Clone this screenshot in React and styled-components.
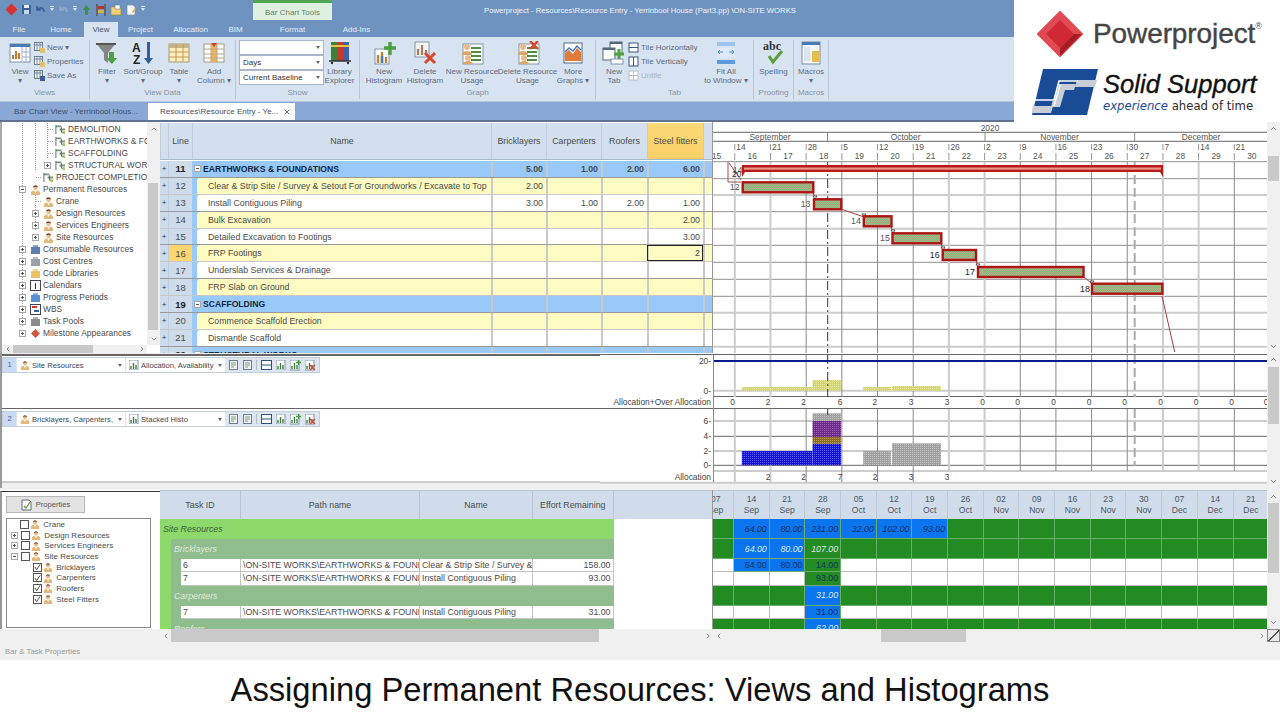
import React from 'react'
import styled, { createGlobalStyle } from 'styled-components'
import { ChevronUp, ChevronDown, ChevronLeft, ChevronRight, X } from 'lucide-react'

const GlobalStyle = createGlobalStyle`
  html, body { margin: 0; padding: 0; background: #fff; }
  body { font-family: "Liberation Sans", Arial, sans-serif; }
  * { box-sizing: border-box; }
`

const Page = styled.div`
  position: relative;
  width: 1280px;
  height: 720px;
  overflow: hidden;
  display: flex;
  flex-direction: column;
  background: #fff;
  > * { flex-shrink: 0; }
`

/* title bar */
const TitleBar = styled.div`
  height: 22px;
  display: flex;
  background: #6f93c0;
`
const Qat = styled.div`
  width: 253px;
  display: flex;
  align-items: center;
  gap: 3px;
  padding: 0 0 3px 5px;
`
const ContextTab = styled.div`
  width: 79px;
  height: 20px;
  padding-top: 5px;
  text-align: center;
  font-size: 8px;
  color: #63806a;
  background: #dff0de;
  border-top: 3px solid #4ea651;
`
const WindowTitle = styled.div`
  padding: 6px 0 0 152px;
  font-size: 7.7px;
  color: #f0f4f9;
  white-space: nowrap;
`

/* ribbon tabs */
const TabRow = styled.div`
  height: 15px;
  display: flex;
  background: #6f93c0;
`
const RibbonTab = styled.div`
  width: ${p => p.$w}px;
  height: 15px;
  line-height: 15px;
  text-align: center;
  font-size: 8px;
  color: ${p => (p.$active ? '#46566b' : '#e6edf5')};
  background: ${p => (p.$active ? '#d8e3f1' : 'transparent')};
`

/* ribbon */
const Ribbon = styled.div`
  height: 64px;
  display: flex;
  padding-top: 3px;
  background: #d8e3f1;
  color: #5b6b80;
  font-size: 8px;
`
const Group = styled.div`
  width: ${p => p.$w}px;
  height: 59px;
  display: flex;
  flex-direction: column;
  border-right: 1px solid #b9c6d8;
`
const GroupBody = styled.div`
  flex: 1;
  display: flex;
  padding-left: ${p => p.$pad || 0}px;
`
const GroupLabel = styled.div`
  height: 12px;
  line-height: 11px;
  text-align: center;
  color: #8593a6;
`
const BigButton = styled.div`
  width: ${p => p.$w}px;
  flex: none;
  display: flex;
  flex-direction: column;
  align-items: center;
  text-align: center;
  line-height: 9px;
  white-space: nowrap;
  svg { flex: none; }
`
const BigIcon = styled.div`
  height: 25px;
  margin-bottom: 2px;
  display: flex;
  align-items: center;
  justify-content: center;
`
const SmallStack = styled.div`
  width: ${p => p.$w}px;
  flex: none;
  display: flex;
  flex-direction: column;
  gap: 2px;
  padding-top: 1px;
`
const SmallItem = styled.div`
  height: 12px;
  display: flex;
  align-items: center;
  gap: 2px;
  white-space: nowrap;
  color: ${p => (p.$off ? '#a9b4c2' : 'inherit')};
`
const Combos = styled.div`
  width: 85px;
  flex: none;
  display: flex;
  flex-direction: column;
`
const Combo = styled.div`
  width: 85px;
  height: 15px;
  display: flex;
  align-items: center;
  padding: 0 3px;
  color: #333;
  background: #fff;
  border: 1px solid #a9b6c8;
  &::after { content: ""; margin-left: auto; border: 2.5px solid transparent; border-top: 3px solid #667; border-bottom: 0; }
`

/* document tabs */
const DocTabs = styled.div`
  height: 19px;
  display: flex;
  padding-top: 1px;
  background: #8aa8d5;
  border-top: 1px solid #b5c6de;
  font-size: 8px;
`
const DocTab = styled.div`
  width: ${p => p.$w}px;
  height: 17px;
  display: flex;
  align-items: center;
  justify-content: space-between;
  padding: 0 4px 0 ${p => p.$pad}px;
  color: #3f4f66;
  background: ${p => (p.$active ? '#fff' : 'transparent')};
  white-space: nowrap;
`
const PaneRule = styled.div`
  height: 2px;
  background: #5f7391;
`

/* upper pane */
const UpperPane = styled.div`
  height: 231px;
  display: flex;
  background: #fff;
`
const TreeColumn = styled.div`
  width: 160px;
  flex: none;
  display: flex;
  flex-direction: column;
  border-left: 2px solid #aaa;
`
const TreeMain = styled.div`
  height: 223px;
  display: flex;
`
const TreeList = styled.div`
  width: 145px;
  overflow: hidden;
  padding-top: 1px;
  background-color: #fff;
`
const TreeRow = styled.div`
  height: 12px;
  display: flex;
  align-items: center;
  gap: 2px;
  padding-left: ${p => p.$left}px;
  font-size: 8.4px;
  letter-spacing: 0.05px;
  color: #4a4a4a;
  white-space: nowrap;
  background-image: ${p =>
    (p.$guides || [])
      .map(() => 'repeating-linear-gradient(to bottom, #9a9a9a 0 1px, transparent 1px 2px)')
      .join(',') || 'none'};
  background-size: 1px 100%;
  background-repeat: no-repeat;
  background-position: ${p => (p.$guides || []).map(x => `${x}px 0`).join(',') || '0 0'};
  svg { flex: none; }
`
const Stub = styled.span`
  width: ${p => p.$w || 8}px;
  height: 1px;
  flex: none;
  background: repeating-linear-gradient(to right, #9a9a9a 0 1px, transparent 1px 2px);
`
const Expander = styled.span`
  width: 7px;
  height: 7px;
  flex: none;
  margin-right: 2px;
  position: relative;
  background: #fff;
  border: 1px solid #a8a8a8;
  &::before { content: ""; position: absolute; left: 1px; right: 1px; top: 2px; height: 1px; background: #555; }
  &::after { content: ""; position: absolute; top: 1px; bottom: 1px; left: 2px; width: 1px; background: ${p => (p.$open ? 'transparent' : '#555')}; }
`
const VBar = styled.div`
  width: ${p => p.$w || 13}px;
  flex: none;
  height: ${p => p.$h}px;
  display: flex;
  flex-direction: column;
  align-items: center;
  background: #f0f0f0;
  color: #555;
`
const VArrow = styled.div`
  height: 13px;
  flex: none;
  display: flex;
  align-items: center;
  justify-content: center;
`
const VTrack = styled.div`
  flex: 1;
  width: 100%;
  padding: ${p => p.$top}px 0 0 1px;
`
const VThumb = styled.div`
  width: ${p => p.$w || 11}px;
  height: ${p => p.$size}px;
  background: #c9c9c9;
`
const HBar = styled.div`
  width: ${p => p.$w}px;
  flex: none;
  height: ${p => p.$h || 13}px;
  display: flex;
  align-items: center;
  background: #f0f0f0;
  color: #555;
`
const HArrow = styled.div`
  width: 11px;
  flex: none;
  display: flex;
  justify-content: center;
`
const HTrack = styled.div`
  flex: 1;
  height: 100%;
  padding-left: ${p => p.$left}px;
`
const HThumb = styled.div`
  width: ${p => p.$size}px;
  height: 100%;
  background: #c9c9c9;
`

/* activity table */
const ActivityTable = styled.div`
  width: 553px;
  flex: none;
  height: 231px;
  overflow: hidden;
  font-size: 8.8px;
  color: #4b4b4b;
  border-right: 1px solid #9a9a9a;
`
const columns = '8px 24px 299px 55px 55px 46px 56px 9px'
const HeadRow = styled.div`
  display: grid;
  grid-template-columns: ${columns};
  height: 37px;
  margin-top: 1px;
  margin-bottom: 1px;
  background: #d3dfec;
  border-bottom: 1px solid #a9b9cc;
`
const HeadCell = styled.div`
  display: flex;
  align-items: center;
  justify-content: center;
  border-left: 1px solid #bfcddd;
  background: ${p => (p.$hot ? 'linear-gradient(#fbd976, #fbd068)' : 'transparent')};
`
const BodyRow = styled.div`
  display: grid;
  grid-template-columns: ${columns};
  height: 16.9px;
  border-bottom: 1px solid ${p => (p.$soft ? '#c8c8c8' : '#9a9a9a')};
  background: ${p => p.$bg};
`
const PlusCell = styled.div`
  display: flex;
  align-items: center;
  justify-content: center;
  font-size: 8px;
  color: #333;
  background: #cddbeb;
`
const LineCell = styled.div`
  display: flex;
  align-items: center;
  justify-content: center;
  font-size: 9.5px;
  font-weight: ${p => (p.$bold ? 700 : 400)};
  color: ${p => (p.$bold ? '#222' : '#4b4b4b')};
  background: ${p => (p.$hot ? '#fbd56f' : '#cddbeb')};
  border-left: 1px solid #bfcddd;
`
const NameCell = styled.div`
  padding-left: ${p => (p.$summary ? 0 : 5)}px;
  background: #99c9f9;
  overflow: hidden;
`
const NameInner = styled.div`
  height: 100%;
  display: flex;
  align-items: center;
  padding-left: ${p => (p.$summary ? 2 : 11)}px;
  background: ${p => p.$bg};
  border-top-left-radius: ${p => (p.$summary ? 0 : 3)}px;
  font-size: ${p => (p.$summary ? 8.6 : 8.8)}px;
  font-weight: ${p => (p.$summary ? 700 : 400)};
  color: ${p => (p.$summary ? '#12263f' : '#4b4b4b')};
  white-space: nowrap;
`
const NumCell = styled.div`
  display: flex;
  align-items: center;
  justify-content: flex-end;
  padding-right: 3px;
  font-weight: ${p => (p.$bold ? 700 : 400)};
  border-left: 2px solid #c9c9c9;
  outline: ${p => (p.$active ? '1px solid #222' : 'none')};
  outline-offset: -1px;
`

/* gantt */
const ChartArea = styled.div`
  width: 554px;
  flex: none;
  overflow: hidden;
  svg { display: block; font-family: "Liberation Sans", Arial, sans-serif; }
`

/* histogram pane */
const HistPane = styled.div`
  height: 135px;
  display: flex;
  background: #fff;
  svg { display: block; font-family: "Liberation Sans", Arial, sans-serif; flex: none; }
`
const HistLeft = styled.div`
  width: 600px;
  flex: none;
  display: flex;
  flex-direction: column;
  padding-top: 1px;
  background: #f0f0f0;
  border-left: 2px solid #999;
`
const HistBlock = styled.div`
  height: ${p => p.$h}px;
  padding-top: ${p => p.$pad}px;
  background: #fff;
  border-top: ${p => p.$rule}px solid #666;
  border-bottom: ${p => p.$end || 0}px solid #ccc;
`
const HistToolbar = styled.div`
  width: 318px;
  height: 16px;
  display: flex;
  align-items: center;
  font-size: 7.6px;
  color: #3b4653;
  background: #dde5ef;
  border: 1px solid #c3cedb;
`
const RowBadge = styled.div`
  width: 13px;
  height: 100%;
  flex: none;
  text-align: center;
  line-height: 13px;
  color: #47628a;
  background: #c9dbf2;
`
const HistCombo = styled.div`
  width: ${p => p.$w}px;
  height: 100%;
  flex: none;
  margin-left: 1px;
  display: flex;
  align-items: center;
  gap: 2px;
  padding: 0 3px;
  background: #fff;
  white-space: nowrap;
  overflow: hidden;
  span { flex: 1; overflow: hidden; }
  &::after { content: ""; flex: none; border: 2px solid transparent; border-top: 3px solid #667; border-bottom: 0; }
`
const ToolGroup = styled.div`
  display: flex;
  flex: none;
  align-items: center;
  gap: 4px;
  padding: 0 ${p => (p.$sep ? 3 : 0)}px 0 4px;
  border-right: ${p => (p.$sep ? '1px solid #b0bccb' : '0')};
`
const Gap = styled.div`
  height: 2px;
  background: #f0f0f0;
`

/* lower pane */
const PropsColumn = styled.div`
  width: 160px;
  flex: none;
  padding: 4px 0 0 4px;
  border-left: 2px solid #999;
  border-top: 1px solid #333;
  margin-top: 1px;
`
const PropsButton = styled.div`
  width: 79px;
  height: 17px;
  display: flex;
  align-items: center;
  justify-content: center;
  gap: 4px;
  font-size: 7.6px;
  color: #555;
  background: #e3e3e3;
  border: 1px solid #b5b5b5;
`
const PropsTree = styled.div`
  width: 145px;
  height: 110px;
  margin-top: 5px;
  border: 1px solid #8a8a8a;
  font-size: 8px;
  color: #4b4b4b;
`
const PropsRow = styled.div`
  height: 10.7px;
  display: flex;
  align-items: center;
  gap: 1px;
  padding-left: ${p => p.$left}px;
  white-space: nowrap;
`
const CheckBox = styled.span`
  width: 9px;
  height: 9px;
  flex: none;
  display: flex;
  align-items: center;
  justify-content: center;
  background: #fff;
  border: 1px solid #555;
`
const LowerTable = styled.div`
  width: 553px;
  flex: none;
  overflow: hidden;
  font-size: 8.8px;
  color: #4b4b4b;
  border-right: 1px solid #999;
`
const lowerCols = '81px 179px 113px 80.5px 99.5px'
const LowerHead = styled.div`
  display: grid;
  grid-template-columns: ${lowerCols};
  height: 29px;
  background: #d0dcea;
  border-top: 1px solid #b8c4d2;
`
const LowerHeadCell = styled.div`
  display: flex;
  align-items: center;
  justify-content: center;
  border-right: 1px solid #b5c3d4;
`
const LowerBody = styled.div`
  width: 453.5px;
  height: 110px;
  overflow: hidden;
  background: #8dd96c;
`
const BandTitle = styled.div`
  height: 20px;
  display: flex;
  align-items: center;
  padding-left: 3px;
  font-style: italic;
  color: #3d5f3d;
  background: #8dd96c;
`
const Nested = styled.div`
  margin-left: 11px;
  background: #90bd8e;
`
const SubTitle = styled.div`
  height: 20px;
  display: flex;
  align-items: center;
  padding-left: 3px;
  font-style: italic;
  color: #dfeade;
`
const DataRows = styled.div`
  margin-left: 10px;
`
const DataRow = styled.div`
  display: grid;
  grid-template-columns: 60px 179px 113px 80.5px;
  height: 13.3px;
  background: #fff;
  border-bottom: 1px solid #c4c4c4;
`
const DataCell = styled.div`
  display: flex;
  align-items: center;
  justify-content: ${p => (p.$num ? 'flex-end' : 'flex-start')};
  padding: 0 2px;
  overflow: hidden;
  white-space: nowrap;
  border-right: 1px solid #c4c4c4;
`
const DateColumn = styled.div`
  width: 554px;
  flex: none;
  overflow: hidden;
`
const dateCols = '21.1px repeat(15, 35.68px)'
const DateHead = styled.div`
  display: grid;
  grid-template-columns: ${dateCols};
  width: 560px;
  height: 29px;
  background: #d0dcea;
  border-top: 1px solid #b8c4d2;
`
const DateHeadCell = styled.div`
  display: flex;
  flex-direction: column;
  align-items: center;
  justify-content: center;
  width: ${p => (p.$clip ? '35.68px' : 'auto')};
  margin-left: ${p => (p.$clip ? '-14.58px' : '0')};
  font-size: 8.6px;
  line-height: 11px;
  color: #4b5563;
  white-space: nowrap;
  border-right: 1px solid #bccadb;
`
const DateBody = styled.div`
  height: 110px;
  overflow: hidden;
`
const DateRow = styled.div`
  display: grid;
  grid-template-columns: ${dateCols};
  width: 560px;
  height: ${p => p.$h}px;
`
const fills = { green: '#228b22', blue: '#0a75ee', white: '#fff' }
const DateCell = styled.div`
  display: flex;
  align-items: center;
  justify-content: flex-end;
  padding-right: 2px;
  font-size: 8.8px;
  font-style: ${p => (p.$italic ? 'italic' : 'normal')};
  color: ${p => (p.$light ? '#dcebf7' : '#14315f')};
  background: ${p => fills[p.$fill]};
  border-right: 1px solid ${p => (p.$fill === 'white' ? '#bdbdbd' : '#68ad68')};
  border-bottom: 1px solid ${p => (p.$fill === 'white' ? '#bdbdbd' : '#68ad68')};
`
const StatusBar = styled.div`
  height: 18px;
  display: flex;
  align-items: center;
  padding-left: 5px;
  font-size: 7.8px;
  color: #9a9a9a;
  background: #f0f0f0;
`
const Caption = styled.div`
  height: 60px;
  line-height: 60px;
  text-align: center;
  font-size: 32.7px;
  color: #111;
  background: #fff;
  white-space: nowrap;
`

/* logos lie over the ribbon */
const LogoPanel = styled.div`
  position: absolute;
  top: 0;
  left: 1014px;
  width: 266px;
  height: 122px;
  padding: 11px 0 0 23px;
  background: #fff;
`
const LogoLine = styled.div`
  display: flex;
  align-items: center;
  gap: ${p => p.$gap}px;
`
const PowerText = styled.div`
  font-size: 28px;
  color: #454545;
  -webkit-text-stroke: 0.4px #454545;
  letter-spacing: -0.1px;
  white-space: nowrap;
  sup { font-size: 9px; vertical-align: 14px; -webkit-text-stroke: 0; line-height: 0; }
`
const SolidBlock = styled.div`
  margin-top: 12px;
  margin-left: -5px;
`
const SolidName = styled.div`
  font-size: 25.6px;
  line-height: 27px;
  font-style: italic;
  color: #111;
  -webkit-text-stroke: 0.35px #111;
  white-space: nowrap;
`
const Tagline = styled.div`
  margin-top: 1px;
  font-family: "DejaVu Sans", sans-serif;
  font-size: 11.7px;
  color: #2b2b2b;
  white-space: nowrap;
  em { color: #1a4b96; }
`

/* drawings */
const Person = ({ size = 11 }) => (
  <svg width={size} height={size} viewBox="0 0 12 12">
    <path d="M1 12V9.5C1 8 3 7.2 4.5 7h3C9 7.2 11 8 11 9.5V12z" fill="#e3b777" />
    <path d="M4.6 7h2.8L6 10z" fill="#fff" />
    <circle cx="6" cy="4" r="2.5" fill="#e8b98a" />
    <path d="M3.4 3.6C3.4 1 8.6 1 8.6 3.6 7 2.8 5 2.8 3.4 3.6z" fill="#5b3a1e" />
  </svg>
)
const GanttGlyph = () => (
  <svg width="11" height="11" viewBox="0 0 12 12">
    <path d="M1 1.5h6v2H1zM5 5h6v2H5z" fill="#7a9a78" />
    <path d="M1 1v10M7 3.5V9h3" stroke="#46607f" fill="none" />
    <rect x="8" y="8" width="3" height="3" fill="#a8c36a" />
  </svg>
)
const MiniChart = ({ x = 0 }) => (
  <g transform={`translate(${x} 0)`}>
    <rect x="0" y="0" width="9" height="10" fill="#fff" stroke="#7f93aa" />
    <path d="M2 9V6M4.5 9V3M7 9V5" stroke="#3f7f3f" strokeWidth="1.4" />
  </g>
)
const SmallDoc = () => (
  <svg width="10" height="10" viewBox="0 0 10 10">
    <rect x=".5" y=".5" width="8" height="9" fill="#eef2f7" stroke="#6d7f95" />
    <path d="M2 3h5M2 5h5M2 7h3" stroke="#7fa36f" />
  </svg>
)
const SplitIcon = () => (
  <svg width="11" height="10" viewBox="0 0 11 10">
    <rect x=".5" y=".5" width="10" height="9" fill="#fff" stroke="#2f4f7f" />
    <path d="M0 5h11" stroke="#2f4f7f" />
  </svg>
)
const BarsIcon = () => (
  <svg width="10" height="10" viewBox="0 0 10 10"><MiniChart /></svg>
)
const AddBars = () => (
  <svg width="11" height="11" viewBox="0 0 11 11">
    <MiniChart />
    <path d="M8.5 0v5M6 2.5h5" stroke="#3f9a3f" strokeWidth="1.3" />
  </svg>
)
const DelBars = () => (
  <svg width="11" height="11" viewBox="0 0 11 11">
    <MiniChart />
    <path d="M5 5l5 5M10 5l-5 5" stroke="#d0452f" strokeWidth="1.3" />
  </svg>
)
const Diamond = () => (
  <svg width="13" height="13" viewBox="0 0 12 12"><path d="M6 .5L11.5 6 6 11.5.5 6z" fill="#d8322f" /></svg>
)
const Save = () => (
  <svg width="11" height="11" viewBox="0 0 11 11">
    <rect x="1" y="1" width="9" height="9" fill="#3a5f95" />
    <rect x="3" y="1" width="5" height="3" fill="#e8eef6" />
    <rect x="3" y="6" width="5" height="4" fill="#c6d4e6" />
  </svg>
)
const Undo = ({ color }) => (
  <svg width="11" height="11" viewBox="0 0 11 11">
    <path d="M2 2v4h4M2.5 6C4 3 9 3 9 8" fill="none" stroke={color} strokeWidth="1.5" />
  </svg>
)
const Drop = () => (
  <svg width="6" height="11" viewBox="0 0 6 11"><path d="M1 4h4L3 7z" fill="#dfe7f1" /><path d="M1 2.5h4" stroke="#dfe7f1" /></svg>
)
const QatArrow = () => (
  <svg width="11" height="12" viewBox="0 0 11 12"><path d="M5.5 1L9 6H7v5H4V6H2z" fill="#3f8f46" /></svg>
)
const QatBars = () => (
  <svg width="12" height="12" viewBox="0 0 12 12">
    <path d="M2 0v12M10 0v12" stroke="#4a3a20" />
    <rect x="3" y="2" width="6" height="3" fill="#b8352a" />
    <rect x="3" y="6" width="6" height="3" fill="#d9b23a" />
  </svg>
)
const QatFolder = () => (
  <svg width="12" height="12" viewBox="0 0 12 12">
    <path d="M1 3h4l1 1h5v7H1z" fill="#efcf77" stroke="#9a7c2c" strokeWidth=".6" />
    <rect x="5" y="1" width="5" height="4" fill="#fff" stroke="#6d7f95" strokeWidth=".6" />
  </svg>
)
const QatDoc = () => (
  <svg width="12" height="12" viewBox="0 0 12 12">
    <path d="M2 1h6l2 2v8H2z" fill="#f4f6f9" stroke="#7d8ea4" strokeWidth=".7" />
    <path d="M7 8l3-4 1 1-3 4z" fill="#e0a33a" />
  </svg>
)

const IconView = () => (
  <svg width="22" height="22" viewBox="0 0 22 22">
    <rect x="1" y="2" width="20" height="18" fill="#fff" stroke="#7f93aa" />
    <rect x="1" y="2" width="20" height="3" fill="#4a7ab5" />
    <path d="M4 17v-4M7 17V9M10 17v-6" stroke="#c9742b" strokeWidth="2" />
    <path d="M13 5v15M17 5v15M13 10h8M13 15h8" stroke="#9fb0c5" />
  </svg>
)
const IconFilter = () => (
  <svg width="24" height="24" viewBox="0 0 24 24">
    <path d="M1 2h20l-8 10v10l-4-3v-7z" fill="#858585" />
    <path d="M1 2h20v2H1z" fill="#555" />
    <path d="M14 11h5v6h3l-5 6-6-6h3z" fill="#4d9f3f" />
  </svg>
)
const IconSort = () => (
  <svg width="24" height="24" viewBox="0 0 24 24">
    <text x="1" y="11" fontSize="12" fontWeight="700" fill="#222" fontFamily="Liberation Sans">A</text>
    <text x="2" y="23" fontSize="12" fontWeight="700" fill="#222" fontFamily="Liberation Sans">Z</text>
    <path d="M16 1h3v16h3l-4.5 6L13 17h3z" fill="#2f5f9f" />
  </svg>
)
const IconTable = () => (
  <svg width="22" height="22" viewBox="0 0 22 22">
    <rect x="1" y="2" width="20" height="18" fill="#fbeec2" stroke="#a89b78" />
    <rect x="1" y="2" width="20" height="4" fill="#c5b48a" />
    <path d="M1 10h20M1 15h20M8 2v18M15 2v18" stroke="#c79a52" />
  </svg>
)
const IconAddCol = () => (
  <svg width="22" height="22" viewBox="0 0 22 22">
    <rect x="1" y="2" width="20" height="18" fill="#fff" stroke="#a89b78" />
    <rect x="8" y="2" width="6" height="18" fill="#f0b35c" />
    <path d="M1 7h20M1 12h20M1 16h20M8 2v18M14 2v18" stroke="#b7a98a" />
    <path d="M8 1h6l-3 4z" fill="#c8402f" />
  </svg>
)
const IconLibrary = () => (
  <svg width="24" height="24" viewBox="0 0 24 24">
    <rect x="3" y="1" width="6" height="19" fill="#3e7f3a" />
    <rect x="9" y="1" width="6" height="19" fill="#c8392b" />
    <rect x="15" y="1" width="6" height="19" fill="#3d62a8" />
    <path d="M3 5h18" stroke="#e8c23a" strokeWidth="2" />
    <path d="M1 20h22" stroke="#333" strokeWidth="1.5" />
    <circle cx="4" cy="22" r="1.2" fill="#333" /><circle cx="20" cy="22" r="1.2" fill="#333" />
  </svg>
)
const HistoBars = () => (
  <>
    <path d="M6 22V14M10 22V11M14 22v-6" strokeWidth="2.4" stroke="#b8843a" />
    <path d="M10 22v-7" strokeWidth="2.4" stroke="#4a7ab5" />
  </>
)
const IconNewHisto = () => (
  <svg width="24" height="24" viewBox="0 0 24 24">
    <rect x="3" y="8" width="14" height="15" fill="#fff" stroke="#8294aa" />
    <HistoBars />
    <path d="M18 1v13M12 7h12" stroke="#4d9f3f" strokeWidth="3.4" />
  </svg>
)
const IconDelHisto = () => (
  <svg width="24" height="24" viewBox="0 0 24 24">
    <rect x="2" y="1" width="14" height="15" fill="#f4f4f6" stroke="#8294aa" />
    <path d="M5 14V8M9 14V4M13 14V9" strokeWidth="2.2" stroke="#a67a5a" />
    <path d="M12 12l10 10M22 12L12 22" stroke="#d8462f" strokeWidth="3" />
  </svg>
)
const IconUsage = ({ del }) => (
  <svg width="24" height="24" viewBox="0 0 24 24">
    <rect x="3" y="3" width="20" height="20" fill="#fff" stroke="#8294aa" />
    <path d="M11 7h10M11 11h10M11 15h10M11 19h10" stroke="#4d8f3f" strokeWidth="2" />
    <circle cx="7" cy="6" r="3" fill="#e8b98a" /><path d="M2 13c0-4 10-4 10 0v1H2z" fill="#d9a86a" />
    <circle cx="8" cy="17" r="3" fill="#e8b98a" /><path d="M3 23c0-4 10-4 10 0z" fill="#d9a86a" />
    {del && <path d="M14 0l8 8M22 0l-8 8" stroke="#d8462f" strokeWidth="2.4" />}
  </svg>
)
const IconGraphs = () => (
  <svg width="22" height="24" viewBox="0 0 22 24">
    <rect x="2" y="2" width="18" height="20" fill="#fff" stroke="#55677f" />
    <path d="M3 20V12l4-3 4 4 4-6 4 4v9z" fill="#e07b39" />
    <path d="M3 11l4-4 4 3 4-5 4 4" stroke="#4a7ab5" fill="none" strokeWidth="1.5" />
  </svg>
)
const IconNewTab = () => (
  <svg width="24" height="24" viewBox="0 0 24 24">
    <rect x="8" y="1" width="12" height="12" fill="#fff" stroke="#55677f" />
    <rect x="8" y="1" width="12" height="2" fill="#55677f" />
    <rect x="1" y="7" width="12" height="12" fill="#fff" stroke="#55677f" />
    <rect x="1" y="7" width="12" height="2" fill="#55677f" />
    <path d="M17 8v10M12 13h10" stroke="#4d9f3f" strokeWidth="3" />
    <rect x="9" y="18" width="12" height="5" fill="#fff" stroke="#8294aa" />
  </svg>
)
const IconFit = () => (
  <svg width="22" height="24" viewBox="0 0 22 24">
    <rect x="2" y="1" width="18" height="4" fill="#9dc3ee" />
    <rect x="2" y="7" width="18" height="10" fill="#dde9f7" />
    <rect x="2" y="19" width="18" height="4" fill="#5e9bdc" />
    <path d="M3 11h5M19 11h-5M5 9l-2 2 2 2M17 9l2 2-2 2" stroke="#4a8ad0" fill="none" />
  </svg>
)
const IconSpell = () => (
  <svg width="24" height="25" viewBox="0 0 24 25">
    <text x="1" y="10" fontSize="12" fontWeight="700" fill="#333" fontFamily="Liberation Serif">abc</text>
    <path d="M7 16l4 6 9-11" fill="none" stroke="#5a9e3a" strokeWidth="3" />
  </svg>
)
const IconMacro = () => (
  <svg width="22" height="24" viewBox="0 0 22 24">
    <rect x="2" y="1" width="18" height="22" fill="#f3f5f8" stroke="#7d8ea4" />
    <rect x="2" y="1" width="18" height="3" fill="#4a7ab5" />
    <rect x="4" y="6" width="6" height="14" fill="#dbe3ee" />
    <rect x="12" y="10" width="8" height="11" rx="1" fill="#e8bd4a" />
  </svg>
)
const SmallGrid = ({ save }) => (
  <svg width="11" height="11" viewBox="0 0 11 11">
    <rect x=".5" y=".5" width="8" height="8" fill="#fff" stroke="#6d7f95" />
    <path d="M.5 3h8M3 .5v8M6 .5v8" stroke="#6d7f95" />
    <rect x="6" y="6" width="5" height="5" fill={save ? '#3a5f95' : '#e3c36a'} />
  </svg>
)
const TileIcon = ({ dir, off }) => (
  <svg width="11" height="11" viewBox="0 0 11 11">
    <rect x="1" y="1" width="9" height="9" fill="#fff" stroke={off ? '#b5bfcc' : '#34577f'} />
    {dir === 'h' && <path d="M1 5.5h9" stroke="#34577f" />}
    {dir === 'v' && <path d="M5.5 1v9" stroke="#34577f" />}
    {dir === 'x' && <path d="M1 5.5h9M5.5 1v9" stroke="#b5bfcc" />}
  </svg>
)
const Tick = () => (
  <svg width="8" height="8" viewBox="0 0 8 8"><path d="M1 4l2 3 4-6" fill="none" stroke="#333" /></svg>
)

const Big = ({ w, icon, children }) => (
  <BigButton $w={w}>
    <BigIcon>{icon}</BigIcon>
    {children}
  </BigButton>
)

function RibbonBar() {
  return (
    <Ribbon>
      <Group $w={90}>
        <GroupBody $pad={6}>
          <Big w={28} icon={<IconView />}>View<br />▾</Big>
          <SmallStack $w={50}>
            <SmallItem><SmallGrid />New ▾</SmallItem>
            <SmallItem><SmallGrid />Properties</SmallItem>
            <SmallItem><SmallGrid save />Save As</SmallItem>
          </SmallStack>
        </GroupBody>
        <GroupLabel>Views</GroupLabel>
      </Group>
      <Group $w={146}>
        <GroupBody>
          <Big w={34} icon={<IconFilter />}>Filter<br />▾</Big>
          <Big w={38} icon={<IconSort />}>Sort/Group<br />▾</Big>
          <Big w={34} icon={<IconTable />}>Table<br />▾</Big>
          <Big w={36} icon={<IconAddCol />}>Add<br />Column ▾</Big>
        </GroupBody>
        <GroupLabel>View Data</GroupLabel>
      </Group>
      <Group $w={124}>
        <GroupBody $pad={3}>
          <Combos>
            <Combo />
            <Combo>Days</Combo>
            <Combo>Current Baseline</Combo>
          </Combos>
          <Big w={31} icon={<IconLibrary />}>Library<br />Explorer</Big>
        </GroupBody>
        <GroupLabel>Show</GroupLabel>
      </Group>
      <Group $w={236}>
        <GroupBody $pad={4}>
          <Big w={40} icon={<IconNewHisto />}>New<br />Histogram</Big>
          <Big w={42} icon={<IconDelHisto />}>Delete<br />Histogram</Big>
          <Big w={52} icon={<IconUsage />}>New Resource<br />Usage</Big>
          <Big w={59} icon={<IconUsage del />}>Delete Resource<br />Usage</Big>
          <Big w={32} icon={<IconGraphs />}>More<br />Graphs ▾</Big>
        </GroupBody>
        <GroupLabel>Graph</GroupLabel>
      </Group>
      <Group $w={158}>
        <GroupBody $pad={4}>
          <Big w={28} icon={<IconNewTab />}>New<br />Tab</Big>
          <SmallStack $w={72}>
            <SmallItem><TileIcon dir="h" />Tile Horizontally</SmallItem>
            <SmallItem><TileIcon dir="v" />Tile Vertically</SmallItem>
            <SmallItem $off><TileIcon dir="x" off />Untile</SmallItem>
          </SmallStack>
          <Big w={52} icon={<IconFit />}>Fit All<br />to Window ▾</Big>
        </GroupBody>
        <GroupLabel>Tab</GroupLabel>
      </Group>
      <Group $w={40}>
        <GroupBody>
          <Big w={39} icon={<IconSpell />}>Spelling</Big>
        </GroupBody>
        <GroupLabel>Proofing</GroupLabel>
      </Group>
      <Group $w={35}>
        <GroupBody>
          <Big w={34} icon={<IconMacro />}>Macros<br />▾</Big>
        </GroupBody>
        <GroupLabel>Macros</GroupLabel>
      </Group>
    </Ribbon>
  )
}

const treeItems = [
  { label: 'DEMOLITION', left: 46, kind: 'gantt', guides: [20, 33, 45], stub: 5 },
  { label: 'EARTHWORKS & FOUNDATIONS', left: 46, kind: 'gantt', guides: [20, 33, 45], stub: 5 },
  { label: 'SCAFFOLDING', left: 46, kind: 'gantt', guides: [20, 33, 45], stub: 5 },
  { label: 'STRUCTURAL WORKS', left: 42, kind: 'gantt', exp: true, guides: [20, 33] },
  { label: 'PROJECT COMPLETION', left: 34, kind: 'gantt', guides: [20], stub: 5 },
  { label: 'Permanent Resources', left: 17, kind: 'person', exp: true, open: true, guides: [20] },
  { label: 'Crane', left: 34, kind: 'person', guides: [20, 33], stub: 5 },
  { label: 'Design Resources', left: 30, kind: 'person', exp: true, guides: [20, 33] },
  { label: 'Services Engineers', left: 30, kind: 'person', exp: true, guides: [20, 33] },
  { label: 'Site Resources', left: 30, kind: 'person', exp: true, guides: [20] },
  { label: 'Consumable Resources', left: 17, kind: 'box', color: '#5f7fb0', exp: true, guides: [20] },
  { label: 'Cost Centres', left: 17, kind: 'box', color: '#9aa0a8', exp: true, guides: [20] },
  { label: 'Code Libraries', left: 17, kind: 'box', color: '#e9c266', exp: true, guides: [20] },
  { label: 'Calendars', left: 17, kind: 'cal', exp: true, guides: [20] },
  { label: 'Progress Periods', left: 17, kind: 'box', color: '#5b8fd8', exp: true, guides: [20] },
  { label: 'WBS', left: 17, kind: 'wbs', exp: true, guides: [20] },
  { label: 'Task Pools', left: 17, kind: 'box', color: '#8c8c8c', exp: true, guides: [20] },
  { label: 'Milestone Appearances', left: 17, kind: 'dia', exp: true },
]

const TreeGlyph = ({ kind, color }) => {
  if (kind === 'person') return <Person />
  if (kind === 'gantt') return <GanttGlyph />
  if (kind === 'cal')
    return (
      <svg width="11" height="11" viewBox="0 0 11 11">
        <rect x=".5" y=".5" width="10" height="10" fill="#fff" stroke="#445" />
        <path d="M5.5 3v6" stroke="#333" />
      </svg>
    )
  if (kind === 'wbs')
    return (
      <svg width="11" height="11" viewBox="0 0 11 11">
        <rect x=".5" y=".5" width="10" height="10" fill="#fff" stroke="#445" />
        <path d="M2 3h5" stroke="#c8392b" strokeWidth="2" /><path d="M4 7h5" stroke="#3d62a8" strokeWidth="2" />
      </svg>
    )
  if (kind === 'dia')
    return (
      <svg width="11" height="11" viewBox="0 0 11 11"><path d="M5.5 1L10 5.5 5.5 10 1 5.5z" fill="#d2543a" /></svg>
    )
  return (
    <svg width="11" height="11" viewBox="0 0 11 11">
      <rect x="1" y="3" width="9" height="7" fill={color} />
      <rect x="3" y="1" width="5" height="3" fill={color} opacity=".7" />
    </svg>
  )
}

const Tree = () => (
  <TreeColumn>
    <TreeMain>
      <TreeList>
        {treeItems.map(t => (
          <TreeRow key={t.label} $left={t.left} $guides={t.guides}>
            {t.stub && <Stub $w={t.stub} />}
            {t.exp && <Expander $open={t.open} />}
            <TreeGlyph kind={t.kind} color={t.color} />
            <span>{t.label}</span>
          </TreeRow>
        ))}
      </TreeList>
      <VBar $w={13} $h={223}>
        <VArrow><ChevronUp size={8} /></VArrow>
        <VTrack $top={48}><VThumb $w={10} $size={147} /></VTrack>
        <VArrow><ChevronDown size={8} /></VArrow>
      </VBar>
    </TreeMain>
    <HBar $w={145} $h={8}>
      <HArrow><ChevronLeft size={8} /></HArrow>
      <HTrack $left={0}><HThumb $size={80} /></HTrack>
      <HArrow><ChevronRight size={8} /></HArrow>
    </HBar>
  </TreeColumn>
)

const activities = [
  { line: 11, kind: 'summary', name: 'EARTHWORKS & FOUNDATIONS', vals: ['5.00', '1.00', '2.00', '6.00'] },
  { line: 12, kind: 'yellow', name: 'Clear & Strip Site / Survey & Setout For Groundworks / Excavate to Top', vals: ['2.00', '', '', ''] },
  { line: 13, kind: 'white', name: 'Install Contiguous Piling', vals: ['3.00', '1.00', '2.00', '1.00'] },
  { line: 14, kind: 'yellow', name: 'Bulk Excavation', vals: ['', '', '', '2.00'] },
  { line: 15, kind: 'white', name: 'Detailed Excavation to Footings', vals: ['', '', '', '3.00'] },
  { line: 16, kind: 'yellow', name: 'FRP Footings', vals: ['', '', '', '2'], active: true },
  { line: 17, kind: 'white', name: 'Underslab Services & Drainage', vals: ['', '', '', ''] },
  { line: 18, kind: 'yellow', name: 'FRP Slab on Ground', vals: ['', '', '', ''] },
  { line: 19, kind: 'summary', name: 'SCAFFOLDING', vals: ['', '', '', ''] },
  { line: 20, kind: 'yellow', name: 'Commence Scaffold Erection', vals: ['', '', '', ''] },
  { line: 21, kind: 'white', name: 'Dismantle Scaffold', vals: ['', '', '', ''] },
  { line: 22, kind: 'summary', name: 'STRUCTURAL WORKS', vals: ['', '', '', ''] },
]
const rowBg = { summary: '#99c9f9', yellow: '#fdfbc2', white: '#fff' }

const Activities = () => (
  <ActivityTable>
    <HeadRow>
      <HeadCell />
      <HeadCell>Line</HeadCell>
      <HeadCell>Name</HeadCell>
      <HeadCell>Bricklayers</HeadCell>
      <HeadCell>Carpenters</HeadCell>
      <HeadCell>Roofers</HeadCell>
      <HeadCell $hot>Steel fitters</HeadCell>
      <HeadCell />
    </HeadRow>
    {activities.map(a => {
      const summary = a.kind === 'summary'
      return (
        <BodyRow key={a.line} $bg={rowBg[a.kind]} $soft={a.kind === 'yellow'}>
          <PlusCell>+</PlusCell>
          <LineCell $bold={summary} $hot={a.active}>{a.line}</LineCell>
          <NameCell $summary={summary}>
            <NameInner $summary={summary} $bg={rowBg[a.kind]}>
              {summary && <Expander $open />}
              {a.name}
            </NameInner>
          </NameCell>
          {a.vals.map((v, i) => (
            <NumCell key={i} $bold={summary} $active={a.active && i === 3}>{v}</NumCell>
          ))}
          <NumCell />
        </BodyRow>
      )
    })}
  </ActivityTable>
)

const gridX = Array.from({ length: 15 }, (_, i) => 734.8 + 35.68 * i)
const lightCols = [0, 1, 6, 7, 12, 13]
const weekNos = [14, 21, 28, 5, 12, 19, 26, 2, 9, 16, 23, 30, 7, 14, 21]
const seqNos = Array.from({ length: 16 }, (_, i) => 15 + i)
const rowLines = [
  [161.7, 0], [178.7, 0], [195, 1], [211.7, 0], [228.7, 1], [245.3, 0],
  [262.3, 0], [279.3, 0], [296.3, 0], [312.7, 1], [329.3, 0], [346.7, 1],
]
const bars = [
  { n: 12, x: 742.7, w: 70.6, y: 182.3, lx: 734.7, ly: 190 },
  { n: 13, x: 814, w: 27.3, y: 199.3, lx: 805.6, ly: 207 },
  { n: 14, x: 863.8, w: 27.7, y: 216.3, lx: 856, ly: 224 },
  { n: 15, x: 892.5, w: 48.8, y: 233.3, lx: 885, ly: 241 },
  { n: 16, x: 942.7, w: 33.3, y: 250, lx: 934.7, ly: 258, dark: true },
  { n: 17, x: 978, w: 105.5, y: 267, lx: 970, ly: 275, dark: true },
  { n: 18, x: 1092, w: 70.4, y: 283.7, lx: 1085, ly: 292, dark: true },
]
const links = [
  [813, 192, 815, 199], [841, 209, 864, 217], [891, 226, 893, 233],
  [941, 243, 943, 250], [976, 260, 978, 267], [1083, 276, 1092, 284],
]
const swatches = [
  ['blueFill', '#1414d8', '#5a5af0'],
  ['purpleFill', '#6a2a8a', '#a060b8'],
  ['brownFill', '#8a6a20', '#b89a50'],
  ['greyFill', '#a0a0a0', '#c4c4c4'],
  ['yellowFill', '#d4d470', '#e8e8a0'],
]

const Gantt = () => (
  <ChartArea>
    <svg width="554" height="231" viewBox="713 122 554 231">
      <defs>
        <pattern id="taskFill" width="2" height="2" patternUnits="userSpaceOnUse">
          <rect width="2" height="2" fill="#7fbb78" />
          <rect width="1" height="1" fill="#b8ad8c" />
          <rect x="1" y="1" width="1" height="1" fill="#b8ad8c" />
        </pattern>
      </defs>
      <rect x="713" y="122" width="554" height="231" fill="#fff" />
      <path d="M713 132.3H1267M713 141.3H1267" stroke="#666" />
      {[827.5, 985, 1134.7].map(x => <path key={x} d={`M${x} 133V141`} stroke="#888" />)}
      <g fontSize="8.4" fill="#555" textAnchor="middle">
        <text x="990" y="131">2020</text>
        <text x="770" y="140">September</text>
        <text x="905.6" y="140">October</text>
        <text x="1059.5" y="140">November</text>
        <text x="1201" y="140">December</text>
        {seqNos.map((n, i) => <text key={n} x={716.6 + 35.68 * i} y="159">{n}</text>)}
      </g>
      <g fontSize="8.4" fill="#555">
        {gridX.map((x, i) => <text key={x} x={x + 1.5} y="149.5">{weekNos[i]}</text>)}
      </g>
      {gridX.map(x => <path key={x} d={`M${x} 144V150M${x} 153V160`} stroke="#999" />)}
      {rowLines.map(([y, light]) => (
        <path key={y} d={`M713 ${y}H1267`} stroke={light ? '#ccc' : '#8f8f8f'} strokeWidth={light ? 2 : 1} />
      ))}
      {gridX.map((x, i) => (
        <path key={x} d={`M${x} 162V353`} stroke={lightCols.includes(i) ? '#ccc' : '#8a8a8a'} strokeWidth={lightCols.includes(i) ? 2 : 1} />
      ))}
      <path d="M827.7 162V353" stroke="#333" strokeDasharray="9 3 2 3" />
      <path d="M1134.7 162V353" stroke="#aaa" strokeWidth="2" strokeDasharray="9 4" />
      <path d="M728 162V182H741M729 163l12 17" stroke="#a05050" fill="none" />
      <text x="733" y="173" fontSize="8.4" fill="#555">14</text>
      <text x="732" y="177" fontSize="8.4" fill="#333">20</text>
      {links.map(([a, b, c, d]) => (
        <g key={a}>
          <path d={`M${a} ${b}L${c} ${d}`} stroke="#a04040" />
          <path d={`M${c - 2} ${d - 3}h4l-2 3z`} fill="#fff" stroke="#333" strokeWidth=".8" />
        </g>
      ))}
      <path d="M1162 296L1174.7 352" stroke="#a04040" />
      <path d="M742 165H1163V177L1160 172H745L742 177Z" fill="#b81a1a" />
      <rect x="744" y="167.5" width="417" height="2.2" fill="#e89a84" />
      {bars.map(b => (
        <g key={b.n}>
          <rect x={b.x} y={b.y} width={b.w} height="10" fill="url(#taskFill)" stroke="#ad1414" strokeWidth="2.4" />
          <text x={b.lx} y={b.ly} fontSize="8.8" textAnchor="middle" fill={b.dark ? '#222' : '#555'}>{b.n}</text>
        </g>
      ))}
    </svg>
  </ChartArea>
)

const HistTools = () => (
  <>
    <ToolGroup $sep><SmallDoc /><SmallDoc /></ToolGroup>
    <ToolGroup><SplitIcon /><BarsIcon /><AddBars /><DelBars /></ToolGroup>
  </>
)

const allocTop = [0, 2, 2, 6, 2, 3, 3, 0, 0, 0, 0, 0, 0, 0, 0]
const allocTopX = [732.6, 768, 803.6, 840, 874.8, 911, 947, 982.6, 1017.6, 1053.7, 1089, 1124.7, 1160.7, 1196, 1231.7]
const allocBottom = [[768, 2], [803.6, 2], [840, 7], [875, 2], [911, 3], [947, 3]]

const HistogramChart = () => (
  <svg width="667" height="135" viewBox="600 353 667 135">
    <defs>
      {swatches.map(([id, a, b]) => (
        <pattern key={id} id={id} width="2" height="2" patternUnits="userSpaceOnUse">
          <rect width="2" height="2" fill={a} />
          <rect width="1" height="1" fill={b} />
        </pattern>
      ))}
    </defs>
    <rect x="600" y="353" width="667" height="135" fill="#fff" />
    <rect x="600" y="483" width="667" height="5" fill="#f0f0f0" />
    <path d="M600 354.5H1267M600 408.5H1267" stroke="#666" strokeWidth="1.2" />
    <path d="M714 396.5H1267" stroke="#666" />
    <path d="M714 390.7H1267M714 421H1267M714 451H1267M714 471H1267M600 482.7H1267" stroke="#ccc" strokeWidth="2" />
    <path d="M714 436.3H1267M714 465.3H1267" stroke="#666" />
    <path d="M713.5 355V482" stroke="#888" />
    {gridX.map((x, i) => (
      <path key={x} d={`M${x} 355V397M${x} 409V${i < 6 ? 482 : 471}`} stroke={lightCols.includes(i) ? '#ccc' : '#8a8a8a'} strokeWidth={lightCols.includes(i) ? 2 : 1} />
    ))}
    <rect x="741.8" y="387" width="70.7" height="3.7" fill="url(#yellowFill)" />
    <rect x="812.5" y="380" width="28.5" height="10.7" fill="url(#yellowFill)" />
    <rect x="863.2" y="387" width="27.8" height="3.7" fill="url(#yellowFill)" />
    <rect x="892" y="386" width="49" height="4.7" fill="url(#yellowFill)" />
    <rect x="741.8" y="451" width="70.7" height="14.3" fill="url(#blueFill)" />
    <rect x="812.5" y="443.7" width="28.5" height="21.6" fill="url(#blueFill)" />
    <rect x="812.5" y="437" width="28.5" height="6.7" fill="url(#brownFill)" />
    <rect x="812.5" y="421" width="28.5" height="16" fill="url(#purpleFill)" />
    <rect x="812.5" y="413.3" width="28.5" height="7.7" fill="url(#greyFill)" />
    <rect x="863.2" y="451" width="27.8" height="14.3" fill="url(#greyFill)" />
    <rect x="892" y="443.3" width="49" height="22" fill="url(#greyFill)" />
    <path d="M827.7 355V397M827.7 409V415" stroke="#333" strokeDasharray="9 3 2 3" />
    <path d="M1134.7 355V397M1134.7 409V466" stroke="#aaa" strokeWidth="2" strokeDasharray="9 4" />
    <path d="M714 361H1267" stroke="#0b1a8c" strokeWidth="2" />
    <g fontSize="8.4" fill="#444" textAnchor="end">
      <text x="711" y="364">20-</text>
      <text x="711" y="394">0-</text>
      <text x="711" y="405">Allocation+Over Allocation</text>
      <text x="711" y="424">6-</text>
      <text x="711" y="439">4-</text>
      <text x="711" y="454">2-</text>
      <text x="711" y="468">0-</text>
      <text x="711" y="480">Allocation</text>
    </g>
    <g fontSize="8.4" fill="#444" textAnchor="middle">
      {allocTop.map((n, i) => <text key={i} x={allocTopX[i]} y="405">{n}</text>)}
      <text x="1266" y="405">0</text>
      {allocBottom.map(([x, n]) => <text key={x} x={x} y="480">{n}</text>)}
    </g>
  </svg>
)

const propItems = [
  { label: 'Crane', left: 13 },
  { label: 'Design Resources', left: 4, exp: true },
  { label: 'Services Engineers', left: 4, exp: true },
  { label: 'Site Resources', left: 4, exp: true, open: true },
  { label: 'Bricklayers', left: 26, on: true },
  { label: 'Carpenters', left: 26, on: true },
  { label: 'Roofers', left: 26, on: true },
  { label: 'Steel Fitters', left: 26, on: true },
]

const PropsPanel = () => (
  <PropsColumn>
    <PropsButton>
      <svg width="11" height="12" viewBox="0 0 11 12">
        <path d="M1 1h7l2 2v8H1z" fill="#fff" stroke="#667" />
        <path d="M3 7l2 2 4-6" fill="none" stroke="#5a9e3a" strokeWidth="1.3" />
      </svg>
      Properties
    </PropsButton>
    <PropsTree>
      {propItems.map(p => (
        <PropsRow key={p.label} $left={p.left}>
          {p.exp && <Expander $open={p.open} />}
          <CheckBox>{p.on && <Tick />}</CheckBox>
          <Person size={10} />
          <span>&nbsp;{p.label}</span>
        </PropsRow>
      ))}
    </PropsTree>
  </PropsColumn>
)

const Row = ({ id, name, left }) => (
  <DataRow>
    <DataCell>{id}</DataCell>
    <DataCell>\ON-SITE WORKS\EARTHWORKS &amp; FOUNDATIONS</DataCell>
    <DataCell>{name}</DataCell>
    <DataCell $num>{left}</DataCell>
  </DataRow>
)

const ResourceTable = () => (
  <LowerTable>
    <LowerHead>
      <LowerHeadCell>Task ID</LowerHeadCell>
      <LowerHeadCell>Path name</LowerHeadCell>
      <LowerHeadCell>Name</LowerHeadCell>
      <LowerHeadCell>Effort Remaining</LowerHeadCell>
      <LowerHeadCell />
    </LowerHead>
    <LowerBody>
      <BandTitle>Site Resources</BandTitle>
      <Nested>
        <SubTitle>Bricklayers</SubTitle>
        <DataRows>
          <Row id="6" name="Clear & Strip Site / Survey & Setout" left="158.00" />
          <Row id="7" name="Install Contiguous Piling" left="93.00" />
        </DataRows>
        <SubTitle>Carpenters</SubTitle>
        <DataRows>
          <Row id="7" name="Install Contiguous Piling" left="31.00" />
        </DataRows>
        <SubTitle>Roofers</SubTitle>
      </Nested>
    </LowerBody>
  </LowerTable>
)

const dateHeads = [
  ['07', 'Sep'], ['14', 'Sep'], ['21', 'Sep'], ['28', 'Sep'], ['05', 'Oct'], ['12', 'Oct'], ['19', 'Oct'], ['26', 'Oct'],
  ['02', 'Nov'], ['09', 'Nov'], ['16', 'Nov'], ['23', 'Nov'], ['30', 'Nov'], ['07', 'Dec'], ['14', 'Dec'], ['21', 'Dec'],
]
const dateRows = [
  { h: 20, base: 'green', italic: true, cells: { 1: ['blue', '64.00'], 2: ['blue', '80.00'], 3: ['blue', '231.00'], 4: ['blue', '32.00'], 5: ['blue', '102.00'], 6: ['blue', '93.00'] } },
  { h: 20, base: 'green', italic: true, light: true, cells: { 1: ['blue', '64.00'], 2: ['blue', '80.00'], 3: ['green', '107.00'] } },
  { h: 13.3, base: 'white', cells: { 1: ['blue', '64.00'], 2: ['blue', '80.00'], 3: ['green', '14.00'] } },
  { h: 13.3, base: 'white', cells: { 3: ['green', '93.00'] } },
  { h: 20, base: 'green', italic: true, light: true, cells: { 3: ['blue', '31.00'] } },
  { h: 13.3, base: 'white', cells: { 3: ['blue', '31.00'] } },
  { h: 20, base: 'green', italic: true, light: true, cells: { 3: ['blue', '62.00'] } },
]

const DateGrid = () => (
  <DateColumn>
    <DateHead>
      {dateHeads.map(([d, m], i) => (
        <DateHeadCell key={d + m} $clip={i === 0}>
          <span>{d}</span>
          <span>{m}</span>
        </DateHeadCell>
      ))}
    </DateHead>
    <DateBody>
      {dateRows.map((r, ri) => (
        <DateRow key={ri} $h={r.h}>
          {dateHeads.map((_, i) => {
            const c = r.cells[i]
            return (
              <DateCell key={i} $fill={c ? c[0] : r.base} $italic={r.italic} $light={r.light}>
                {c && c[1]}
              </DateCell>
            )
          })}
        </DateRow>
      ))}
    </DateBody>
  </DateColumn>
)

const SideBar = ({ h, top, size }) => (
  <VBar $h={h}>
    <VArrow><ChevronUp size={9} /></VArrow>
    <VTrack $top={top}><VThumb $size={size} /></VTrack>
    <VArrow><ChevronDown size={9} /></VArrow>
  </VBar>
)

const LowerWrap = styled.div`
  display: flex;
  flex-direction: column;
  height: 152px;
`
const LowerRow = styled.div`
  display: flex;
  height: 139px;
  background: #fff;
`
const BottomRow = styled.div`
  display: flex;
  height: 13px;
  background: #f0f0f0;
`
const Grip = styled.div`
  width: 13px;
  height: 13px;
  flex: none;
  background: linear-gradient(135deg, transparent 48%, #555 48% 56%, transparent 56%), #e8e8e8;
  border: 1px solid #888;
`

export default function App() {
  return (
    <Page>
      <GlobalStyle />
      <TitleBar>
        <Qat>
          <Diamond /><Save /><Undo color="#3a5f95" /><Drop /><Undo color="#93abc9" /><Drop />
          <QatArrow /><QatBars /><QatFolder /><QatDoc /><Drop />
        </Qat>
        <ContextTab>Bar Chart Tools</ContextTab>
        <WindowTitle>Powerproject - Resources\Resource Entry - Yerrinbool House (Part3.pp) \ON-SITE WORKS</WindowTitle>
      </TitleBar>
      <TabRow>
        <RibbonTab $w={38}>File</RibbonTab>
        <RibbonTab $w={46}>Home</RibbonTab>
        <RibbonTab $w={34} $active>View</RibbonTab>
        <RibbonTab $w={45}>Project</RibbonTab>
        <RibbonTab $w={55}>Allocation</RibbonTab>
        <RibbonTab $w={35}>BIM</RibbonTab>
        <RibbonTab $w={79}>Format</RibbonTab>
        <RibbonTab $w={49}>Add-Ins</RibbonTab>
      </TabRow>
      <RibbonBar />
      <DocTabs>
        <DocTab $w={148} $pad={14}>Bar Chart View - Yerrinbool Hous...</DocTab>
        <DocTab $w={147} $pad={12} $active>
          Resources\Resource Entry - Ye...
          <X size={8} strokeWidth={2.5} />
        </DocTab>
      </DocTabs>
      <PaneRule />
      <UpperPane>
        <Tree />
        <Activities />
        <Gantt />
        <SideBar h={231} top={21} size={25} />
      </UpperPane>
      <HistPane>
        <HistLeft>
          <HistBlock $h={54} $rule={2} $pad={1}>
            <HistToolbar>
              <RowBadge>1</RowBadge>
              <HistCombo $w={108}><Person size={10} /><span>Site Resources</span></HistCombo>
              <HistCombo $w={99}><BarsIcon /><span>Allocation, Availability</span></HistCombo>
              <HistTools />
            </HistToolbar>
          </HistBlock>
          <HistBlock $h={75} $rule={1} $pad={2} $end={2}>
            <HistToolbar>
              <RowBadge>2</RowBadge>
              <HistCombo $w={108}><Person size={10} /><span>Bricklayers, Carpenters,</span></HistCombo>
              <HistCombo $w={99}><BarsIcon /><span>Stacked Histo</span></HistCombo>
              <HistTools />
            </HistToolbar>
          </HistBlock>
        </HistLeft>
        <HistogramChart />
        <SideBar h={135} top={1} size={57} />
      </HistPane>
      <Gap />
      <LowerWrap>
        <LowerRow>
          <PropsPanel />
          <ResourceTable />
          <DateGrid />
          <SideBar h={139} top={0} size={70} />
        </LowerRow>
        <BottomRow>
          <HBar $w={160} />
          <HBar $w={553}>
            <HArrow><ChevronLeft size={8} /></HArrow>
            <HTrack $left={0}><HThumb $size={428} /></HTrack>
            <HArrow><ChevronRight size={8} /></HArrow>
          </HBar>
          <HBar $w={554}>
            <HArrow><ChevronLeft size={8} /></HArrow>
            <HTrack $left={157}><HThumb $size={85} /></HTrack>
            <HArrow><ChevronRight size={8} /></HArrow>
          </HBar>
          <Grip />
        </BottomRow>
      </LowerWrap>
      <StatusBar>Bar &amp; Task Properties</StatusBar>
      <Caption>Assigning Permanent Resources: Views and Histograms</Caption>
      <LogoPanel>
        <LogoLine $gap={10}>
          <svg width="46" height="46" viewBox="0 0 46 46">
            <path d="M23 1L45 23 23 45 1 23Z" fill="#e04a52" stroke="#e04a52" strokeWidth="2" strokeLinejoin="round" />
            <path d="M23 9L37 23 23 37 9 23Z" fill="#cf2a33" />
            <path d="M37 23L45 23 23 45 23 37Z" fill="#a81c26" />
          </svg>
          <PowerText>Powerproject<sup>®</sup></PowerText>
        </LogoLine>
        <SolidBlock>
          <LogoLine $gap={5}>
            <svg width="66" height="46" viewBox="0 0 66 46">
              <path d="M11 0H66L55 46H0Z" fill="#1a4b96" />
              <path d="M45 11H65L63 18H43ZM1 37H21L19 44H-1Z" fill="#c9ced6" />
              <path d="M27 15H44L42 21H33L28 38H19L20.5 32H24Z" fill="#c9ced6" />
              <path d="M3 31H22L27 12H46M22 37L28 16" fill="none" stroke="#fff" strokeWidth="1.6" />
            </svg>
            <div>
              <SolidName>Solid Support</SolidName>
              <Tagline><em>experience</em> ahead of time</Tagline>
            </div>
          </LogoLine>
        </SolidBlock>
      </LogoPanel>
    </Page>
  )
}
